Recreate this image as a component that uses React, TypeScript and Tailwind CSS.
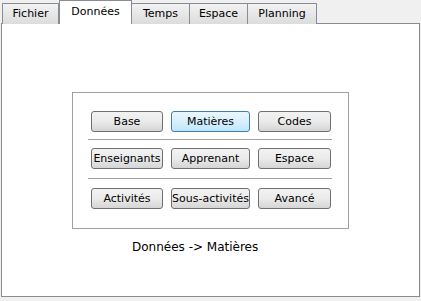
const TABS = [
  { label: "Fichier", w: 57 },
  { label: "Données", w: 73, active: true },
  { label: "Temps", w: 59 },
  { label: "Espace", w: 59 },
  { label: "Planning", w: 70 },
];

const ROWS = [
  ["Base", "Matières", "Codes"],
  ["Enseignants", "Apprenant", "Espace"],
  ["Activités", "Sous-activités", "Avancé"],
];

function Btn({ label, active }: { label: string; active?: boolean }) {
  return (
    <div
      className={
        "flex h-[21px] items-center justify-center rounded-[3px] border text-[11px] leading-none text-black " +
        (active
          ? "border-[#3c7fb1] bg-gradient-to-b from-[#eaf6fd] via-[#d9f0fc] to-[#bee6fd]"
          : "border-[#707070] bg-gradient-to-b from-[#f2f2f2] via-[#ebebeb] to-[#d5d5d5]")
      }
    >
      {label}
    </div>
  );
}

export default function App() {
  return (
    <div className="h-[301px] w-[421px] overflow-hidden bg-[#f0f0f0] font-['DejaVu_Sans',Verdana,sans-serif]">
      {/* Tabs */}
      <div className="flex h-[24px] items-end pl-[2px]">
        {TABS.map((t) =>
          t.active ? (
            <div
              key={t.label}
              className="relative z-10 flex h-[24px] items-center justify-center border border-b-0 border-[#898c95] bg-white pb-[1px] text-[11px] text-black"
              style={{ width: t.w }}
            >
              {t.label}
            </div>
          ) : (
            <div
              key={t.label}
              className="-ml-px flex h-[21px] items-center justify-center border border-b-0 border-[#898c95] bg-gradient-to-b from-[#f2f2f2] to-[#dcdcdc] text-[11px] text-black first:ml-0"
              style={{ width: t.w }}
            >
              {t.label}
            </div>
          )
        )}
      </div>

      {/* Panel */}
      <div className="mx-px -mt-px h-[274px] border border-[#898c95] bg-white">
        <div className="ml-[70px] mt-[68px] h-[137px] w-[277px] border border-[#a0a0a0] pl-[15px] pt-[18px]">
          {ROWS.map((row, i) => (
            <div key={i}>
              {i > 0 && (
                <div
                  className={
                    "w-[244px] border-t border-[#a0a0a0] " +
                    (i === 1 ? "mb-[8px] mt-[7px]" : "mb-[9px] mt-[9px]")
                  }
                />
              )}
              <div className="ml-[3px] grid grid-cols-[72px_79px_73px] gap-x-[8px]">
                {row.map((b) => (
                  <Btn key={b} label={b} active={b === "Matières"} />
                ))}
              </div>
            </div>
          ))}
        </div>
        <div className="ml-[130px] mt-[10px] text-[12px] leading-[16px] text-black">
          Données -&gt; Matières
        </div>
      </div>
    </div>
  );
}
